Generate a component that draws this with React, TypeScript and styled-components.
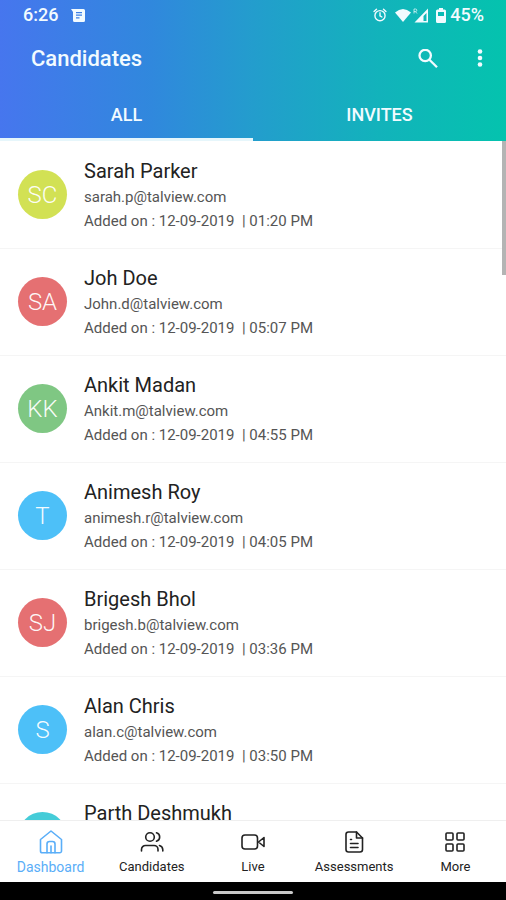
import React, { useState } from 'react';
import styled, { createGlobalStyle } from 'styled-components';

const GlobalStyle = createGlobalStyle`
  * { box-sizing: border-box; }
  body { margin: 0; background: #fff; font-family: Roboto, "Liberation Sans", sans-serif; }
  button { font: inherit; color: inherit; background: none; border: 0; padding: 0; cursor: pointer; }
`;

const Screen = styled.div`
  display: flex;
  flex-direction: column;
  height: 100vh;
  overflow: hidden;
`;

const Header = styled.header`
  flex: none;
  color: #f2fbff;
  background: linear-gradient(90deg, #4676ee 0%, #3088dd 30%, #239dcd 50%, #12b3bb 75%, #04c3ae 100%);
`;

const StatusBar = styled.div`
  display: flex;
  align-items: center;
  justify-content: space-between;
  height: 30px;
  padding: 0 22px 0 23px;
  font-size: 18px;
  font-weight: 500;
  line-height: 30px;
`;

const StatusGroup = styled.div<{ $gap: number }>`
  display: flex;
  align-items: center;
  gap: ${(p) => p.$gap}px;
`;

const Glyph = styled.svg`
  display: block;
  flex: none;
`;

const TitleBar = styled.div`
  display: flex;
  align-items: center;
  justify-content: space-between;
  height: 58px;
  padding: 0 14px 0 31px;
`;

const Title = styled.h1`
  margin: 0;
  font-size: 22px;
  font-weight: 500;
  line-height: 28px;
`;

const Actions = styled.div`
  display: flex;
  gap: 28px;
`;

const IconButton = styled.button`
  display: grid;
  place-items: center;
  width: 24px;
  height: 28px;
`;

const Tabs = styled.div`
  display: grid;
  grid-template-columns: 1fr 1fr;
  height: 53px;
`;

const Tab = styled.button<{ $active: boolean }>`
  && {
    padding-top: 2px;
    font-size: 18px;
    font-weight: 500;
    border-bottom: 3px solid ${(p) => (p.$active ? '#e6f6fb' : 'transparent')};
  }
`;

const Content = styled.main`
  position: relative;
  flex: 1;
  min-height: 0;
  overflow: hidden;
`;

const ScrollThumb = styled.div`
  position: absolute;
  top: 0;
  right: 0;
  width: 4px;
  height: 134px;
  background: #b4b4b4;
`;

const List = styled.ul`
  margin: 0;
  padding: 1px 0 0;
  list-style: none;
`;

const Row = styled.li`
  display: flex;
  align-items: flex-start;
  gap: 17px;
  padding: 16px 18px 15px;
  border-bottom: 1px solid #f5f5f5;
`;

const Avatar = styled.div<{ $color: string }>`
  display: grid;
  place-items: center;
  flex: none;
  width: 49px;
  height: 49px;
  margin-top: 12px;
  border-radius: 50%;
  background: ${(p) => p.$color};
  color: #fffffff0;
  font-size: 24px;
  font-weight: 300;
`;

const Details = styled.div`
  min-width: 0;
`;

const Name = styled.h2`
  margin: 0;
  color: #222;
  font-size: 20px;
  font-weight: 400;
  line-height: 27px;
`;

const Line = styled.p`
  margin: 0;
  color: #555;
  font-size: 15px;
  line-height: 24px;
`;

const BottomNav = styled.nav`
  display: grid;
  grid-template-columns: repeat(5, 1fr);
  flex: none;
  height: 62px;
  border-top: 1px solid #efefef;
`;

const NavItem = styled.button<{ $active: boolean }>`
  && {
    display: flex;
    flex-direction: column;
    align-items: center;
    gap: 4px;
    padding-top: 9px;
    color: ${(p) => (p.$active ? '#5aaef8' : '#222')};
    font-size: ${(p) => (p.$active ? 14 : 13)}px;
    line-height: 18px;
  }
`;

const SystemBar = styled.div`
  display: grid;
  justify-items: center;
  align-content: center;
  flex: none;
  height: 18px;
  padding-top: 3px;
  background: #000;
`;

const Handle = styled.div`
  width: 80px;
  height: 3px;
  border-radius: 2px;
  background: #c9c9c9;
`;

const candidates = [
  { initials: 'SC', color: '#d2e154', name: 'Sarah Parker', email: 'sarah.p@talview.com', time: '01:20 PM' },
  { initials: 'SA', color: '#e57072', name: 'Joh Doe', email: 'John.d@talview.com', time: '05:07 PM' },
  { initials: 'KK', color: '#7fc783', name: 'Ankit Madan', email: 'Ankit.m@talview.com', time: '04:55 PM' },
  { initials: 'T', color: '#4dc0f8', name: 'Animesh Roy', email: 'animesh.r@talview.com', time: '04:05 PM' },
  { initials: 'SJ', color: '#e57072', name: 'Brigesh Bhol', email: 'brigesh.b@talview.com', time: '03:36 PM' },
  { initials: 'S', color: '#4dc0f8', name: 'Alan Chris', email: 'alan.c@talview.com', time: '03:50 PM' },
  { initials: '', color: '#45ccd8', name: 'Parth Deshmukh', email: '', time: '' },
];

const stroke = { fill: 'none', stroke: 'currentColor', strokeLinecap: 'round', strokeLinejoin: 'round' } as const;

const navItems = [
  {
    label: 'Dashboard',
    icon: (
      <>
        <path d="M1.500 9.500 12 1l10.500 8.500V21a1.800 1.800 0 0 1-1.800 1.800H3.300A1.800 1.800 0 0 1 1.500 21z" />
        <path d="M8 22.800V14a2.500 2.500 0 0 1 2.500-2.500h3A2.500 2.500 0 0 1 16 14v8.800M12 16v6.800" />
      </>
    ),
  },
  {
    label: 'Candidates',
    icon: (
      <>
        <circle cx="10" cy="7" r="4.300" />
        <path d="M1.500 21v-1.500a4 4 0 0 1 4-4h8.500a4 4 0 0 1 4 4V21M16.500 2.700a4.500 4.500 0 0 1 0 8.600M19.500 15.500a4.500 4.500 0 0 1 3.300 4.200V21" />
      </>
    ),
  },
  {
    label: 'Live',
    icon: (
      <>
        <rect x="1" y="5" width="15.500" height="14" rx="3" />
        <path d="m17.500 12 5.500-4.500v9z" />
      </>
    ),
  },
  {
    label: 'Assessments',
    icon: (
      <>
        <path d="M14.500 2H6.500A2.500 2.500 0 0 0 4 4.500v15A2.500 2.500 0 0 0 6.500 22h11.500a2.500 2.500 0 0 0 2.500-2.500V8z" />
        <path d="M14.500 2v6h6M8.500 9.500h1M8.500 13.500h7.500M8.500 17.500h7.500" />
      </>
    ),
  },
  {
    label: 'More',
    icon: (
      <>
        <rect x="3" y="3" width="7" height="7" rx="1" />
        <rect x="14" y="3" width="7" height="7" rx="1" />
        <rect x="3" y="14" width="7" height="7" rx="1" />
        <rect x="14" y="14" width="7" height="7" rx="1" />
      </>
    ),
  },
];

const tabs = ['ALL', 'INVITES'];

export default function App() {
  const [tab, setTab] = useState('ALL');
  const [page, setPage] = useState('Dashboard');

  return (
    <Screen>
      <GlobalStyle />
      <Header>
        <StatusBar>
          <StatusGroup $gap={13}>
            <span>6:26</span>
            <Glyph width="14" height="13" viewBox="0 0 14 13">
              <path fill="currentColor" fillRule="evenodd" d="M0 0h12.500A1.500 1.500 0 0 1 14 1.500v10a1.500 1.500 0 0 1-1.500 1.500h-9A1.500 1.500 0 0 1 2 11.500V3zM5 3v1.200h6V3zM5 5.600v1.200h6V5.600zM5 8.200v1.200h3.500V8.200z" />
            </Glyph>
          </StatusGroup>
          <StatusGroup $gap={8}>
            <Glyph width="14" height="14" viewBox="0 0 16 16" {...stroke} strokeWidth="1.600">
              <circle cx="8" cy="8.800" r="5.800" />
              <path d="M8 5.500v3.500l2.200 1.300M1.200 4 4 1.300M14.800 4 12 1.300" />
            </Glyph>
            <Glyph width="33" height="15" viewBox="0 0 33 15" fill="currentColor">
              <path d="M0 4.500Q8 -2.500 16 4.500L8 14z" />
              <path fillRule="evenodd" d="M33 .5v14H19.500zM31.500 5v8h-3V8z" />
              <path d="M19 5.500V1h1.500a1.300 1.300 0 0 1 0 2.600H19M20.500 3.600l1.500 1.900" fill="none" stroke="currentColor" strokeWidth="1" opacity="0.700" />
            </Glyph>
            <StatusGroup $gap={4}>
              <Glyph width="10" height="15" viewBox="0 0 10 15">
                <path fill="currentColor" fillRule="evenodd" d="M3 0h4v1.500h1.500A1.500 1.500 0 0 1 10 3v10.500A1.500 1.500 0 0 1 8.500 15h-7A1.500 1.500 0 0 1 0 13.500V3a1.500 1.500 0 0 1 1.500-1.500H3zM2 4v4h6V4z" />
              </Glyph>
              <span>45%</span>
            </StatusGroup>
          </StatusGroup>
        </StatusBar>
        <TitleBar>
          <Title>Candidates</Title>
          <Actions>
            <IconButton aria-label="Search">
              <Glyph width="20" height="20" viewBox="0 0 20 20" {...stroke} strokeWidth="2.300" strokeLinecap="butt">
                <circle cx="7.200" cy="6.500" r="5.700" />
                <path d="m11.200 10.500 7.800 7.800" />
              </Glyph>
            </IconButton>
            <IconButton aria-label="More options">
              <Glyph width="6" height="20" viewBox="0 0 6 20" fill="currentColor">
                <circle cx="3" cy="2.500" r="2.300" />
                <circle cx="3" cy="9" r="2.300" />
                <circle cx="3" cy="15.500" r="2.300" />
              </Glyph>
            </IconButton>
          </Actions>
        </TitleBar>
        <Tabs role="tablist">
          {tabs.map((t) => (
            <Tab key={t} role="tab" aria-selected={t === tab} $active={t === tab} onClick={() => setTab(t)}>
              {t}
            </Tab>
          ))}
        </Tabs>
      </Header>
      <Content>
        <List>
          {candidates.map((c) => (
            <Row key={c.name}>
              <Avatar $color={c.color}>{c.initials}</Avatar>
              <Details>
                <Name>{c.name}</Name>
                {c.email && <Line>{c.email}</Line>}
                {c.time && <Line>Added on : 12-09-2019 {'\u00a0'}| {c.time}</Line>}
              </Details>
            </Row>
          ))}
        </List>
        <ScrollThumb />
      </Content>
      <BottomNav>
        {navItems.map((n) => (
          <NavItem key={n.label} $active={n.label === page} onClick={() => setPage(n.label)}>
            <Glyph width="24" height="24" viewBox="0 0 24 24" {...stroke} strokeWidth="1.600">
              {n.icon}
            </Glyph>
            {n.label}
          </NavItem>
        ))}
      </BottomNav>
      <SystemBar>
        <Handle />
      </SystemBar>
    </Screen>
  );
}
